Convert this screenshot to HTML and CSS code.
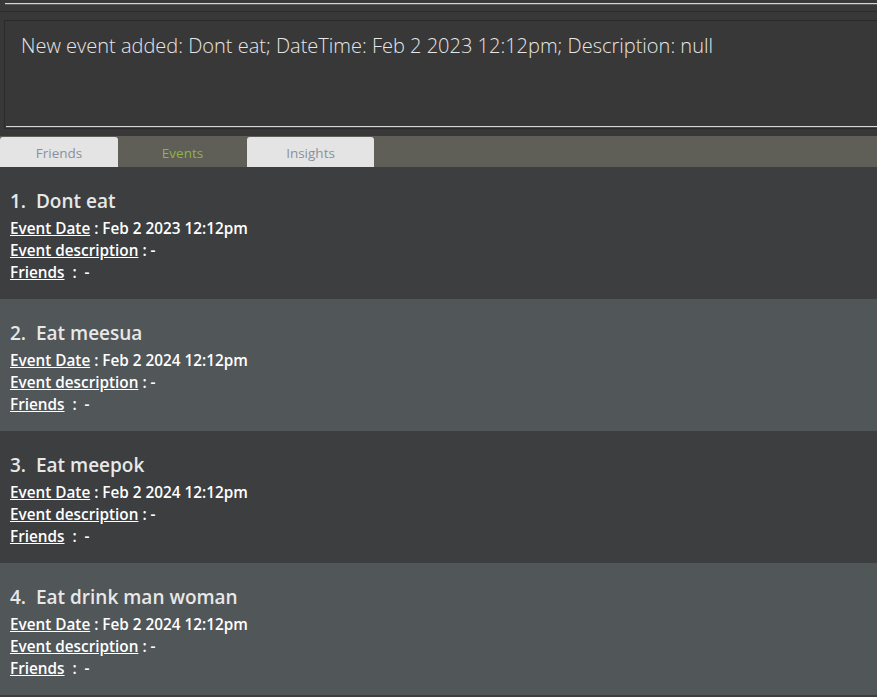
FILE: index.html
```html
<!DOCTYPE html>
<html>
<head>
<meta charset="utf-8">
<link rel="stylesheet" href="styles.css">
</head>
<body>
<div class="app">
  <div class="cmd">
    <div class="cmd-line"></div>
    <div class="cmd-sep"></div>
  </div>
  <div class="result">
    <div class="result-text">New event added: Dont eat; DateTime: Feb 2 2023 12:12pm; Description: null</div>
    <div class="result-line"></div>
  </div>
  <div class="tabs">
    <div class="tab">Friends</div>
    <div class="tab selected">Events</div>
    <div class="tab">Insights</div>
  </div>
  <div class="list">
    <div class="row even">
      <div class="title">1.  Dont eat</div>
      <div class="detail"><span class="lbl">Event Date</span> : Feb 2 2023 12:12pm</div>
      <div class="detail"><span class="lbl">Event description</span> : -</div>
      <div class="detail"><span class="lbl">Friends</span>  :  -</div>
    </div>
    <div class="row odd">
      <div class="title">2.  Eat meesua</div>
      <div class="detail"><span class="lbl">Event Date</span> : Feb 2 2024 12:12pm</div>
      <div class="detail"><span class="lbl">Event description</span> : -</div>
      <div class="detail"><span class="lbl">Friends</span>  :  -</div>
    </div>
    <div class="row even">
      <div class="title">3.  Eat meepok</div>
      <div class="detail"><span class="lbl">Event Date</span> : Feb 2 2024 12:12pm</div>
      <div class="detail"><span class="lbl">Event description</span> : -</div>
      <div class="detail"><span class="lbl">Friends</span>  :  -</div>
    </div>
    <div class="row odd">
      <div class="title">4.  Eat drink man woman</div>
      <div class="detail"><span class="lbl">Event Date</span> : Feb 2 2024 12:12pm</div>
      <div class="detail"><span class="lbl">Event description</span> : -</div>
      <div class="detail"><span class="lbl">Friends</span>  :  -</div>
    </div>
  </div>
</div>
</body>
</html>
```

FILE: styles.css
```css
html, body {
  margin: 0;
  padding: 0;
  background: #383838;
  overflow: hidden;
}
.app {
  width: 877px;
  height: 697px;
  display: flex;
  flex-direction: column;
  font-family: "Open Sans", "Noto Sans", sans-serif;
}
.cmd {
  height: 20px;
  background: #383838;
}
.cmd-line {
  margin: 3px 0 0 5px;
  height: 1px;
  background: #d6d6d6;
  border-bottom: 1px solid #5a5a5a;
}
.cmd-sep {
  margin-top: 6px;
  height: 1px;
  background: #2c2c2c;
}
.result {
  margin-left: 4px;
  height: 107px;
  border: 1px solid #2a2a2a;
  border-right: none;
  background: #383838;
  display: flex;
  flex-direction: column;
}
.result-text {
  flex: 1;
  padding: 10px 0 0 16px;
  color: #e6e6e6;
  font-weight: 300;
  font-size: 20px;
  line-height: 30px;
  white-space: nowrap;
}
.result-line {
  margin-left: 1px;
  height: 1px;
  background: #d6d6d6;
  border-bottom: 1px solid #4a4a4a;
}
.tabs {
  margin-top: 7px;
  height: 31px;
  background: #5f5e57;
  display: flex;
  align-items: flex-end;
}
.tab {
  height: 30px;
  background: #e4e4e4;
  color: #8a8fa0;
  font-size: 13.5px;
  font-weight: 400;
  display: flex;
  align-items: center;
  justify-content: center;
  border-radius: 3px 3px 0 0;
  padding-top: 1px;
  box-sizing: border-box;
}
.tab:nth-child(1) { width: 118px; }
.tab:nth-child(2) { width: 129px; }
.tab:nth-child(3) { width: 127px; }
.tab.selected {
  background: transparent;
  color: #8db542;
}
.list {
  flex: 1;
  background: #3c3e3f;
}
.row {
  height: 132px;
  box-sizing: border-box;
  padding: 21px 0 0 10px;
  color: #ffffff;
}
.row.even { background: #3c3e3f; }
.row.odd { background: #515658; }
.title {
  font-size: 19px;
  font-weight: 600;
  line-height: 27px;
  color: #e8e8e8;
  white-space: pre;
  margin-bottom: 2px;
}
.detail {
  font-size: 15.3px;
  font-weight: 600;
  line-height: 22px;
  white-space: pre;
}
.lbl {
  text-decoration: underline;
}
```
